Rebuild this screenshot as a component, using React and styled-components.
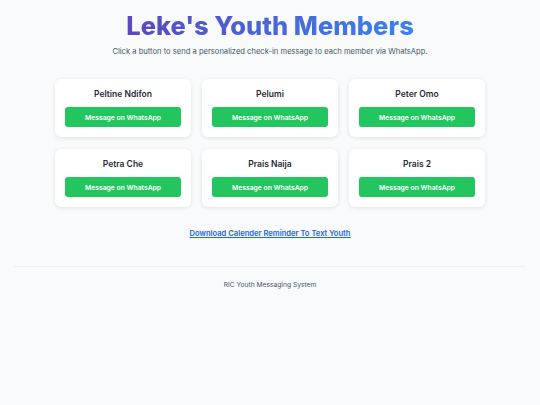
import React from 'react'
import styled, { createGlobalStyle } from 'styled-components'

const members = ['Peltine Ndifon', 'Pelumi', 'Peter Omo', 'Petra Che', 'Prais Naija', 'Prais 2']

function App() {
  return (
    <>
      <GlobalStyle />
      <Page>
        <Header>
          <Title>Leke's Youth Members</Title>
          <Subtitle>Click a button to send a personalized check-in message to each member via WhatsApp.</Subtitle>
        </Header>
        <Grid>
          {members.map(name => (
            <Card key={name}>
              <Name>{name}</Name>
              <WhatsAppButton>Message on WhatsApp</WhatsAppButton>
            </Card>
          ))}
        </Grid>
        <LinkRow>
          <DownloadLink href="#">Download Calender Reminder To Text Youth</DownloadLink>
        </LinkRow>
        <Footer>RIC Youth Messaging System</Footer>
      </Page>
    </>
  )
}

export default App

const GlobalStyle = createGlobalStyle`
  html, body {
    margin: 0;
    padding: 0;
    background: #f8fafc;
    font-family: Inter, "Liberation Sans", sans-serif;
  }
`

const Page = styled.div`
  min-height: 405px;
  padding: 0 14px;
`

const Header = styled.header`
  text-align: center;
  padding-top: 10px;
`

const Title = styled.h1`
  display: inline-block;
  margin: 0;
  font-size: 25.5px;
  line-height: 32px;
  font-weight: 800;
  background: linear-gradient(90deg, #5a48bf, #3b82f0);
  -webkit-background-clip: text;
  background-clip: text;
  color: transparent;
`

const Subtitle = styled.p`
  margin: 5px 0 0;
  font-size: 7.6px;
  line-height: 10px;
  color: #4b5563;
`

const Grid = styled.div`
  display: grid;
  grid-template-columns: repeat(3, 136px);
  gap: 12px 11px;
  justify-content: center;
  margin-top: 22px;
`

const Card = styled.div`
  background: #fff;
  border-radius: 6px;
  box-shadow: 0 1px 4px rgba(0, 0, 0, 0.1);
  padding: 10px 10px 10px;
  text-align: center;
`

const Name = styled.div`
  font-size: 8.5px;
  font-weight: 600;
  color: #1f2937;
  line-height: 11px;
  margin-bottom: 7px;
`

const WhatsAppButton = styled.button`
  display: block;
  width: 100%;
  height: 20px;
  border: none;
  border-radius: 3px;
  background: #22c55e;
  color: #fff;
  font-family: inherit;
  font-size: 6.8px;
  font-weight: 600;
  cursor: pointer;
`

const LinkRow = styled.div`
  text-align: center;
  margin-top: 18px;
  line-height: 10px;
`

const DownloadLink = styled.a`
  font-size: 7.6px;
  font-weight: 600;
  color: #2563eb;
  text-decoration: underline;
`

const Footer = styled.footer`
  margin-top: 27px;
  border-top: 1px solid #eceff3;
  padding-top: 14px;
  text-align: center;
  font-size: 6.7px;
  line-height: 9px;
  color: #4b5563;
`
